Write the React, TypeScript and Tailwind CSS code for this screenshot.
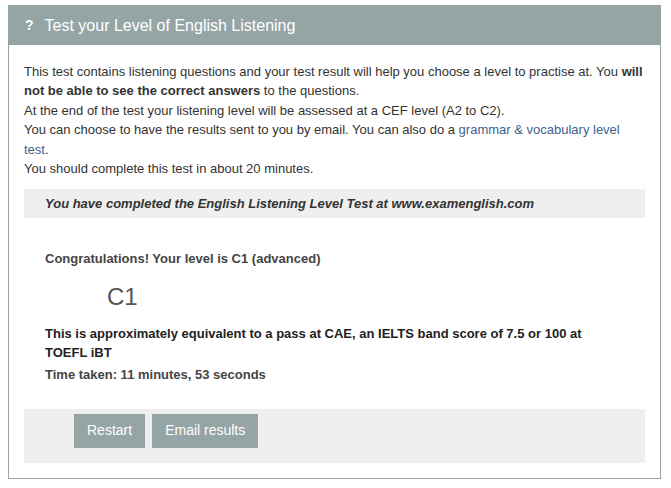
export default function App() {
  const font = { fontFamily: '"Liberation Sans", Arial, sans-serif' };
  return (
    <div className="min-h-screen bg-white pl-[8px] pt-[5px]" style={font}>
      <div className="w-[653px] border border-[#95a5a6] bg-white">
        <div className="flex h-[39px] items-center bg-[#95a5a6] pl-[16px] text-white">
          <span className="mr-[11px] text-[14px] font-bold">?</span>
          <span className="text-[16px]">Test your Level of English Listening</span>
        </div>
        <div className="px-[15px] pb-[15px] pt-[17px] text-[13px] leading-[19.4px] text-[#333]">
          <p>
            This test contains listening questions and your test result will help you choose a level to practise at. You{' '}
            <b>will not be able to see the correct answers</b> to the questions.
            <br />
            At the end of the test your listening level will be assessed at a CEF level (A2 to C2).
            <br />
            You can choose to have the results sent to you by email. You can also do a{' '}
            <span className="text-[#41618e]">grammar &amp; vocabulary level test</span>.
            <br />
            You should complete this test in about 20 minutes.
          </p>
          <div className="mt-[11px] flex h-[29px] items-center bg-[#efefef] pl-[21px] font-bold italic">
            You have completed the English Listening Level Test at www.examenglish.com
          </div>
          <div className="px-[21px]">
            <p className="mt-[31px] font-bold text-[#444]">Congratulations! Your level is C1 (advanced)</p>
            <p className="mt-[13px] pl-[62px] text-[24px] leading-[30px] text-[#555]">C1</p>
            <p className="mt-[12px] w-[560px] font-bold text-[#222]">
              This is approximately equivalent to a pass at CAE, an IELTS band score of 7.5 or 100 at TOEFL iBT
            </p>
            <p className="mt-[2px] font-bold text-[#444]">Time taken: 11 minutes, 53 seconds</p>
          </div>
          <div className="mt-[25px] flex h-[54px] gap-[7px] bg-[#efefef] pl-[50px] pt-[5px]">
            <button className="h-[34px] bg-[#95a5a6] px-[13px] text-[14px] text-white">Restart</button>
            <button className="h-[34px] bg-[#95a5a6] px-[13px] text-[14px] text-white">Email results</button>
          </div>
        </div>
      </div>
    </div>
  );
}
